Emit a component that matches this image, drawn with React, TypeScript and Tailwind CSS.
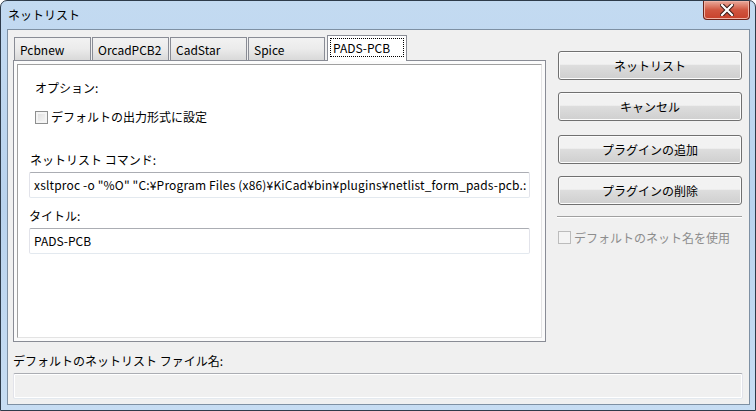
import React from "react";

const font = { fontFamily: '"Noto Sans CJK JP", "Noto Sans", sans-serif' };

function Tab({ label, selected }: { label: string; selected?: boolean }) {
  if (selected) {
    return (
      <div className="relative z-10 -mb-px ml-px flex h-[26px] w-[80px] items-start border border-b-0 border-[#898c95] bg-white px-[2px] pt-[2px]">
        <div className="flex h-[19px] w-full items-center border border-dotted border-black pl-[2px] leading-none">
          {label}
        </div>
      </div>
    );
  }
  return (
    <div className="mr-px flex h-[23px] w-[77px] items-center border border-b-0 border-[#898c95] bg-gradient-to-b from-[#f2f2f2] via-[#ebebeb] to-[#d9d9d9] pl-[5px] pt-px leading-none">
      {label}
    </div>
  );
}

function Button({ label, className }: { label: string; className?: string }) {
  return (
    <div
      className={
        "flex h-[29px] w-[184px] items-center justify-center rounded-[3px] border border-[#707070] bg-gradient-to-b from-[#f2f2f2] from-45% via-[#dddddd] via-50% to-[#cfcfcf] leading-none text-black shadow-[inset_0_0_0_1px_#fcfcfc] " +
        (className ?? "")
      }
    >
      {label}
    </div>
  );
}

function Check({ disabled }: { disabled?: boolean }) {
  return (
    <div
      className={
        "h-[13px] w-[13px] border " +
        (disabled
          ? "border-[#bcbcbc] bg-[#f4f4f4]"
          : "border-[#8e8f8f] bg-gradient-to-br from-[#dcdcdc] to-[#f8f8f8] shadow-[inset_0_0_0_2px_#f4f4f4]")
      }
    />
  );
}

function TextBox({
  value,
  disabled,
  className,
}: {
  value?: string;
  disabled?: boolean;
  className?: string;
}) {
  return (
    <div
      className={
        "flex h-[26px] items-center overflow-hidden whitespace-nowrap rounded-[2px] border border-t-[#abadb3] border-x-[#e2e3ea] border-b-[#e3e9ef] pl-[4px] leading-none text-black " +
        (disabled ? "bg-[#f0f0f0] shadow-[inset_0_0_0_1px_#ffffff] " : "bg-white ") +
        (className ?? "")
      }
    >
      {value}
    </div>
  );
}

export default function App() {
  return (
    <div
      className="flex h-[411px] w-[756px] flex-col overflow-hidden rounded-t-[7px] border border-[#2e3b4a] bg-gradient-to-b from-[#c3daf1] via-[#b9d3ee] to-[#c7ddf3] text-[12px] text-black"
      style={font}
    >
      {/* Title bar */}
      <div className="flex h-[28px] shrink-0 items-start justify-between">
        <div className="pl-[7px] pt-[6px] leading-[16px]">ネットリスト</div>
        <div className="mr-[5px] flex h-[19px] w-[47px] items-center justify-center rounded-b-[4px] border border-t-0 border-[#6c2319] bg-gradient-to-b from-[#e9a99b] via-[#d0553f] to-[#c8412b] shadow-[inset_0_0_0_1px_#f0b3a6]">
          <svg width="14" height="12" viewBox="0 0 14 12">
            <path
              d="M2 1 L12 11 M12 1 L2 11"
              stroke="#3a1a16"
              strokeWidth="4.2"
              strokeLinecap="square"
            />
            <path
              d="M2 1 L12 11 M12 1 L2 11"
              stroke="#ffffff"
              strokeWidth="2.2"
              strokeLinecap="square"
            />
          </svg>
        </div>
      </div>

      <div className="flex flex-1 px-[6px] pb-[5px]">
        {/* Client area */}
        <div className="flex flex-1 flex-col border border-[#7e90a3] bg-[#f0f0f0] pl-[5px] pr-[6px] pt-[5px]">
          <div className="flex">
            {/* Left: notebook */}
            <div className="flex w-[533px] flex-col">
              <div className="flex h-[25px] items-end pl-[1px]">
                <Tab label="Pcbnew" />
                <Tab label="OrcadPCB2" />
                <Tab label="CadStar" />
                <Tab label="Spice" />
                <Tab label="PADS-PCB" selected />
              </div>
              <div className="h-[282px] border border-[#898c95] bg-[#fbfbfb] p-[3px]">
                <div className="h-full border border-t-[#a0a0a0] border-l-[#a0a0a0] border-r-[#e3e3e3] border-b-[#e3e3e3] bg-white px-[11px]">
                  <div className="mt-[15px] h-[16px] pl-[6px] leading-[16px]">
                    オプション:
                  </div>
                  <div className="mt-[13px] flex h-[16px] items-center gap-[3px] pl-[6px]">
                    <Check />
                    <span className="leading-[16px]">デフォルトの出力形式に設定</span>
                  </div>
                  <div className="mt-[27px] h-[16px] pl-[1px] leading-[16px]">
                    ネットリスト コマンド:
                  </div>
                  <div className="mt-[4px]">
                    <TextBox
                      className="tracking-[0.17px]"
                      value={'xsltproc -o "%O" "C:¥Program Files (x86)¥KiCad¥bin¥plugins¥netlist_form_pads-pcb.:'}
                    />
                  </div>
                  <div className="mt-[10px] h-[16px] leading-[16px]">タイトル:</div>
                  <div className="mt-[4px]">
                    <TextBox value="PADS-PCB" />
                  </div>
                </div>
              </div>
            </div>

            {/* Right: buttons */}
            <div className="ml-[12px] flex w-[184px] flex-col pt-[16px]">
              <Button label="ネットリスト" />
              <Button label="キャンセル" className="mt-[12px]" />
              <Button label="プラグインの追加" className="mt-[14px]" />
              <Button label="プラグインの削除" className="mt-[12px]" />
              <div className="ml-[-1px] mt-[11px] h-px bg-[#a0a0a0] shadow-[0_1px_0_#ffffff]" />
              <div className="mt-[14px] flex h-[13px] items-center gap-[3px] text-[#8d8d8d]">
                <Check disabled />
                <span className="leading-[16px]">デフォルトのネット名を使用</span>
              </div>
            </div>
          </div>

          {/* Bottom */}
          <div className="mt-[11px] h-[16px] leading-[16px]">
            デフォルトのネットリスト ファイル名:
          </div>
          <div className="mt-[4px] w-[730px]">
            <TextBox disabled />
          </div>
        </div>
      </div>
    </div>
  );
}
